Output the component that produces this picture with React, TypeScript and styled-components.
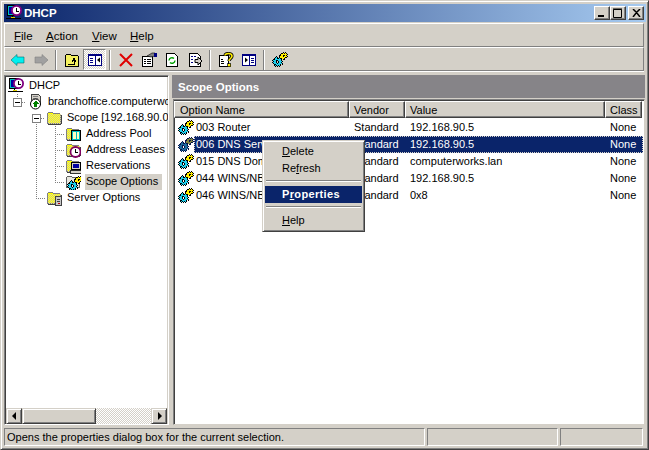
import React from "react";
import styled, { createGlobalStyle } from "styled-components";

const Global = createGlobalStyle`
  html, body { margin: 0; padding: 0; background: #d4d0c8; }
  * { box-sizing: border-box; }
`;
const checker = "repeating-conic-gradient(#d4d0c8 0 25%, #fff 0 50%) 0 0 / 2px 2px";

const Win = styled.div`
  width: 649px; height: 450px; overflow: hidden; display: flex; flex-direction: column;
  padding: 3px 2px 3px 3px; background: #d4d0c8; position: relative;
  font: 11px/13px "Liberation Sans", Arial, sans-serif; color: #000;
  border: 1px solid; border-color: #d4d0c8 #404040 #404040 #d4d0c8;
  box-shadow: inset 1px 1px 0 #fff, inset -1px -1px 0 #808080;
`;
const TitleBar = styled.div`
  height: 18px; margin-bottom: 1px; display: flex; align-items: center; padding: 0 2px 0 2px; flex: none;
  background: linear-gradient(90deg, #0a246a, #a6caf0); color: #fff; font-weight: 700; font-size: 11.5px;
`;
const TitleText = styled.span`margin-left: 2px; padding-top: 1px; flex: 1;`;
const CapBtn = styled.button<{ $gap?: number }>`
  width: 16px; height: 14px; padding: 0; margin-left: ${p => p.$gap ?? 0}px; background: #d4d0c8; border: 1px solid;
  border-color: #fff #404040 #404040 #fff; box-shadow: inset -1px -1px 0 #808080;
  display: flex; align-items: center; justify-content: center;
`;
const Bar = styled.div`
  height: 24px; flex: none; display: flex; align-items: center; width: 640px;
  border: 1px solid; border-color: #fff #808080 #808080 #fff;
`;
const MenuItem = styled.span<{ $w: number }>`
  width: ${p => p.$w}px; flex: none; font-size: 11.5px; padding-top: 2px;
`;
const MenuBar = styled(Bar)`padding-left: 9px;`;
const ToolBar = styled(Bar)`padding: 1px 0 0 1px; box-shadow: 0 1px 0 #fff;`;
const Tool = styled.div<{ $pressed?: boolean }>`
  width: 23px; height: 21px; flex: none; display: flex; align-items: center; justify-content: center;
  ${p => p.$pressed ? `background: ${checker}; border: 1px solid; border-color: #808080 #fff #fff #808080;` : ""}
`;
const Sep = styled.div`
  width: 8px; height: 20px; flex: none;
  &::after { content: ""; display: block; width: 2px; height: 20px; margin-left: 3px; background: linear-gradient(90deg, #808080 50%, #fff 50%); }
`;
const Main = styled.div`flex: none; height: 350px; display: flex; margin-top: 4px; width: 641px;`;
const LeftPane = styled.div`
  width: 165px; margin-right: 3px; height: 350px; background: #fff; display: flex; flex-direction: column;
  border: 1px solid; border-color: #808080 #fff #fff #808080;
  box-shadow: inset 1px 1px 0 #404040, inset -1px -1px 0 #d4d0c8;
`;
const Tree = styled.div`flex: 1; overflow: hidden; padding: 2px 0 0 2px; min-height: 0;`;
const TreeRow = styled.div`height: 16px; display: flex; align-items: center; white-space: nowrap;`;
const IconCell = styled.div`width: 22px; height: 16px; flex: none; padding-left: 1px; display: flex; align-items: center;`;
const TreeLabel = styled.span<{ $sel?: boolean }>`
  padding: 1px 4px 2px 1px; margin-left: -1px; background: ${p => p.$sel ? "#d4d0c8" : "transparent"};
`;
const HScroll = styled.div`height: 16px; display: flex; flex: none; margin: 0 1px 0 1px; background: ${checker};`;
const ScrollBtn = styled.div<{ $w?: number }>`
  width: ${p => p.$w ?? 16}px; height: 16px; background: #d4d0c8; border: 1px solid; flex: none;
  border-color: #d4d0c8 #404040 #404040 #d4d0c8; box-shadow: inset 1px 1px 0 #fff, inset -1px -1px 0 #808080;
  display: flex; align-items: center; justify-content: center;
`;
const ScrollGap = styled.div`flex: 1;`;
const RightPane = styled.div`flex: 1; display: flex; flex-direction: column; height: 350px; min-width: 0;`;
const Band = styled.div`
  height: 23px; flex: none; background: #868488; color: #fff; font-weight: 700; padding: 2px 0 0 6px;
  display: flex; align-items: center; font-size: 11.5px; margin-bottom: 1px;
`;
const List = styled.div`
  flex: 1; margin-left: 1px; background: #fff; min-height: 0; overflow: hidden; padding: 1px 1px 0 1px;
  border: 1px solid; border-color: #808080 #d4d0c8 #d4d0c8 #808080;
  box-shadow: inset 1px 1px 0 #404040;
`;
const Head = styled.div`display: flex; height: 17px; margin: 0 0 1px -1px;`;
const HeadCell = styled.div<{ $w: number }>`
  width: ${p => p.$w}px; flex: none; height: 17px; padding: 2px 0 0 4px; background: #d4d0c8; white-space: nowrap; overflow: hidden;
  display: flex; align-items: center; border: 1px solid; border-color: #fff #404040 #404040 #fff;
  box-shadow: inset -1px -1px 0 #808080;
  &:first-child { padding-left: 5px; }
`;
const Row = styled.div`display: flex; height: 17px; align-items: center; white-space: nowrap;`;
const IconSlot = styled.div`width: 19px; flex: none; padding-left: 3px; display: flex; align-items: center; height: 17px;`;
const RowBody = styled.div<{ $sel?: boolean }>`
  display: flex; flex: 1; height: 17px; align-items: center;
  ${p => p.$sel ? `background: #0a246a; color: #fff; outline: 1px dotted #d4d0c8; outline-offset: -1px;` : ""}
`;
const Col = styled.div<{ $w: number }>`width: ${p => p.$w}px; flex: none; overflow: hidden; padding-left: 5px;`;
const NameText = styled.div`width: 155px; flex: none; overflow: hidden; padding-left: 2px;`;
const Status = styled.div`height: 18px; margin-top: 3px; display: flex; gap: 2px; flex: none;`;
const Panel = styled.div<{ $w: number }>`
  width: ${p => p.$w}px; height: 18px; padding: 0 0 0 2px; white-space: nowrap; border: 1px solid; border-color: #808080 #fff #fff #808080;
  display: flex; align-items: center;
`;
const Menu = styled.div`
  position: absolute; left: 261px; top: 139px; width: 103px; height: 92px; background: #d4d0c8; padding: 2px;
  border: 1px solid; border-color: #d4d0c8 #404040 #404040 #d4d0c8;
  box-shadow: inset 1px 1px 0 #fff, inset -1px -1px 0 #808080;
`;
const MItem = styled.div<{ $on?: boolean }>`
  height: 17px; padding-left: 17px; display: flex; align-items: center;
  ${p => p.$on ? "background: #0a246a; color: #fff; font-weight: 700; letter-spacing: .35px;" : ""}
`;
const MSep = styled.div<{ $b: number }>`height: 2px; margin: 3px 1px ${p => p.$b}px 1px; background: linear-gradient(#808080 50%, #fff 50%);`;

const Ico = ({ s = 16, children, w }: { s?: number; w?: number; children: React.ReactNode }) => (
  <svg width={w ?? s} height={s} viewBox={`0 0 ${w ?? s} ${s}`} style={{ display: "block", flex: "none" }} shapeRendering="crispEdges">{children}</svg>
);

const gearMap = [
  "...........K.K..",
  ".........KKYKYK.",
  "........KYYYYYYK",
  ".......KKYYKKYK.",
  "....K..KYYYKYYYK",
  "...KCK.KYYYYYKK.",
  "..KCCKKCKKYYK...",
  ".KKCCCCCCK.KK...",
  "KCCCKKCCCK......",
  ".KCCK.KCCCK.....",
  "KCCCK.KCCK......",
  ".KCCCKCCCCK.....",
  "..KKCCCCK.K.....",
  "..KCKCKCK.......",
  "...K.K.K........",
  "................",
];
const Pixels = ({ map, pal, x = 0, y = 0 }: { map: string[]; pal: Record<string, string>; x?: number; y?: number }) => (
  <g transform={`translate(${x} ${y})`}>
    {map.flatMap((row, j) => row.split("").map((ch, i) => pal[ch]
      ? <rect key={`${i}-${j}`} x={i} y={j} width={1} height={1} fill={pal[ch]} /> : null))}
  </g>
);
const bright = { K: "#000", Y: "#ffee00", C: "#1fd0ee" };
const dim = { K: "#06124a", Y: "#7d8440", C: "#1c6c9c" };
const Gears = ({ d }: { d?: boolean }) => <Ico><Pixels map={gearMap} pal={d ? dim : bright} /></Ico>;

const ditherCells: [number, number][] = [];
for (let j = 4; j < 14; j++) for (let i = 2; i < 15; i++) if ((i + j) % 2 === 0) ditherCells.push([i, j]);

const FolderShape = () => (
  <g>
    <path d="M1.5 13.5V3.5l1-1h4l1 1h6l1 1v9z" fill="#ffff00" stroke="#808080" />
    {ditherCells.map(([i, j]) => <rect key={`${i}-${j}`} x={i} y={j} width={1} height={1} fill="#d8d49c" />)}
    <path d="M2 14.5h13M15.5 5v9" stroke="#404040" />
  </g>
);
const Dhcp = () => (
  <Ico>
    <rect x="1.5" y=".5" width="9" height="10" fill="#00c0c0" stroke="#000" />
    <rect x="3" y="2" width="5" height="7" fill="#0000a0" />
    <circle cx="10.5" cy="5.5" r="4.6" fill="#fff" stroke="#800080" strokeWidth="1.8" shapeRendering="auto" />
    <path d="M10.5 3v3h2" fill="none" stroke="#000" />
    <path d="M0 13.5h15M6.5 11v2" stroke="#000" fill="none" />
    <path d="M5 12.5h4" stroke="#e0d000" />
  </Ico>
);
const Server = () => (
  <Ico>
    <path d="M4.5 .5h7l2 2v8h-9z" fill="#d4d0c8" stroke="#404040" />
    <path d="M6 2.5h5M6 4.5h5" stroke="#808080" />
    <circle cx="8.5" cy="10" r="5" fill="#fff" stroke="#000" shapeRendering="auto" />
    <path d="M8.5 6.5l3.5 3.5h-2v3h-3v-3h-2z" fill="#008000" />
  </Ico>
);
const Folder = () => <Ico><FolderShape /></Ico>;
const FolderServer = () => (
  <Ico>
    <FolderShape />
    <rect x="9.5" y="6.5" width="6" height="9" fill="#c8c8c8" stroke="#404040" />
    <path d="M11 9h3M11 11h3" stroke="#404040" />
    <rect x="12" y="13" width="2" height="1" fill="#c00000" />
  </Ico>
);
const FolderPool = () => (
  <Ico>
    <FolderShape />
    <rect x="6.5" y="4.5" width="9" height="10" fill="#00c0c0" stroke="#000" />
    <rect x="8" y="6" width="3" height="7" fill="#ffffc0" /><rect x="12" y="6" width="2" height="7" fill="#ffffc0" />
  </Ico>
);
const FolderClock = () => (
  <Ico>
    <FolderShape />
    <circle cx="10.5" cy="10" r="5" fill="#fff" stroke="#800060" strokeWidth="1.8" shapeRendering="auto" />
    <path d="M10.5 7v3h2" fill="none" stroke="#000" />
  </Ico>
);
const FolderPc = () => (
  <Ico>
    <FolderShape />
    <rect x="6.5" y="4.5" width="9" height="7" fill="#d4d0c8" stroke="#000" />
    <rect x="8" y="6" width="6" height="4" fill="#0000a0" />
    <rect x="5" y="12" width="11" height="3" fill="#d4d0c8" stroke="#000" strokeWidth=".8" />
  </Ico>
);
const FolderOpts = () => (
  <Ico>
    <path d="M1.5 13.5V3.5l1-1h4l1 1h6l1 1v9z" fill="#e8e8e0" stroke="#606060" />
    <Pixels map={gearMap} pal={bright} x={2} y={2} />
  </Ico>
);

const Guide = ({ k }: { k: "blank" | "v" | "t" | "l" | "mu" | "md" }) => (
  <Ico w={19}>
    {(k === "v" || k === "t") && <path d="M10.5 0V16" stroke="#808080" strokeDasharray="1 1" />}
    {k === "l" && <path d="M10.5 0V8" stroke="#808080" strokeDasharray="1 1" />}
    {(k === "t" || k === "l") && <path d="M10 8.5H19" stroke="#808080" strokeDasharray="1 1" />}
    {k === "mu" && <path d="M10.5 0V4" stroke="#808080" strokeDasharray="1 1" />}
    {k === "md" && <path d="M10.5 12V16" stroke="#808080" strokeDasharray="1 1" />}
    {(k === "mu" || k === "md") && (
      <g>
        <path d="M15 8.5H19" stroke="#808080" strokeDasharray="1 1" />
        <rect x="6.5" y="4.5" width="8" height="8" fill="#fff" stroke="#808080" />
        <path d="M8 8.5h5" stroke="#000" />
      </g>
    )}
  </Ico>
);

const U = styled.span`text-decoration: underline;`;
const Arrow = ({ c, flip }: { c: string; flip?: boolean }) => (
  <Ico>
    <path d={flip ? "M15 8L9 2.5V5H2v6h7v2.5z" : "M1 8l6-5.5V5h7v6H7v2.5z"} fill={c} stroke={flip ? "#808080" : "#007070"} strokeWidth=".6" shapeRendering="auto" />
  </Ico>
);
const Page = ({ children }: { children?: React.ReactNode }) => (
  <g>
    <path d="M2.5 1.5h8l3 3v10h-11z" fill="#fff" stroke="#000" />
    {children}
  </g>
);

const tools: React.ReactNode[] = [
  <Tool key="b"><Arrow c="#00f0f0" /></Tool>,
  <Tool key="f"><Arrow c="#a0a0a0" flip /></Tool>,
  <Sep key="s1" />,
  <Tool key="u"><Ico>
    <path d="M1.5 14.5V3.5l1-1h4l1 1h6l1 1v10z" fill="#f4f060" stroke="#000" />
    <path d="M4 12h6V8M8 8h4M8 9.5l2-3 2 3" fill="none" stroke="#000" />
  </Ico></Tool>,
  <Tool key="p" $pressed><Ico>
    <rect x="1.5" y="2.5" width="13" height="11" fill="#fff" stroke="#000080" />
    <rect x="1" y="2" width="14" height="2" fill="#000080" />
    <path d="M8.5 3v10" stroke="#000080" /><path d="M3 6h3M3 8h3M3 10h3" stroke="#000080" />
    <path d="M13 5.5L10 8l3 2.5z" fill="#000" shapeRendering="auto" />
  </Ico></Tool>,
  <Sep key="s2" />,
  <Tool key="x"><Ico><path d="M2 2l12 12M14 2L2 14" stroke="#e00000" strokeWidth="2" shapeRendering="auto" /></Ico></Tool>,
  <Tool key="pr"><Ico>
    <path d="M1.5 4.5h10v10h-10z" fill="#fff" stroke="#000" />
    <path d="M3 7h2M6 7h4M3 9h2M6 9h4M3 11h2M6 11h4" stroke="#000" />
    <path d="M6 4l5-3h3v3l-4 1z" fill="#808080" stroke="#000" strokeWidth=".6" shapeRendering="auto" /><rect x="13" y="1" width="3" height="4" fill="#000080" />
  </Ico></Tool>,
  <Tool key="r"><Ico>
    <Page />
    <path d="M5 8.5a3 3 0 0 1 5-2M11 8.5a3 3 0 0 1-5 2" fill="none" stroke="#00a000" strokeWidth="1.4" shapeRendering="auto" />
  </Ico></Tool>,
  <Tool key="e"><Ico>
    <Page>
      <path d="M4 4h2M7 4h2M4 7h2M4 10h2" stroke="#000080" />
    </Page>
    <path d="M8 7.5h3V5l4 4-4 4v-2.5H8z" fill="#d4d0c8" stroke="#000" shapeRendering="auto" />
  </Ico></Tool>,
  <Sep key="s3" />,
  <Tool key="h"><Ico>
    <path d="M1.5 3.5h9v11h-9z" fill="#fff" stroke="#000" />
    <path d="M3 7h2M3 9h3M3 11h3" stroke="#000" />
    <path d="M7 3.5C7 .8 14 .8 14 4c0 2.5-3 2.5-3 5" fill="none" stroke="#000" strokeWidth="3.2" shapeRendering="auto" />
    <path d="M7 3.5C7 .8 14 .8 14 4c0 2.5-3 2.5-3 5" fill="none" stroke="#ffee00" strokeWidth="1.6" shapeRendering="auto" />
    <rect x="9.5" y="11.5" width="3" height="3" fill="#ffee00" stroke="#000" strokeWidth=".7" />
  </Ico></Tool>,
  <Tool key="a"><Ico>
    <rect x="1.5" y="2.5" width="13" height="11" fill="#fff" stroke="#000080" />
    <rect x="1" y="2" width="14" height="2" fill="#000080" />
    <path d="M8.5 3v10" stroke="#000080" /><path d="M10 6h3M10 8h3M10 10h3" stroke="#000080" />
    <path d="M4 5.5L7 8l-3 2.5z" fill="#000" shapeRendering="auto" />
  </Ico></Tool>,
  <Sep key="s4" />,
  <Tool key="g"><Gears /></Tool>,
];

const rows = [
  { n: "003 Router", v: "192.168.90.5" },
  { n: "006 DNS Servers", v: "192.168.90.5", sel: true },
  { n: "015 DNS Domain Name", v: "computerworks.lan" },
  { n: "044 WINS/NBNS Servers", v: "192.168.90.5" },
  { n: "046 WINS/NBT Node Type", v: "0x8" },
];

export default function App() {
  return (
    <Win>
      <Global />
      <TitleBar>
        <Dhcp />
        <TitleText>DHCP</TitleText>
        <CapBtn aria-label="min"><svg width="8" height="8"><rect x="0" y="6" width="6" height="2" fill="#000" /></svg></CapBtn>
        <CapBtn aria-label="max" $gap={0}><svg width="10" height="10"><path d="M.5 1.5h8v8h-8z M0 1h9" fill="none" stroke="#000" /></svg></CapBtn>
        <CapBtn aria-label="close" $gap={2}><svg width="9" height="8"><path d="M1 0l3.5 3.5L8 0M1 8l3.5-4.5L8 8" fill="none" stroke="#000" strokeWidth="1.5" /></svg></CapBtn>
      </TitleBar>
      <MenuBar>
        <MenuItem $w={32}><U>F</U>ile</MenuItem>
        <MenuItem $w={46}><U>A</U>ction</MenuItem>
        <MenuItem $w={38}><U>V</U>iew</MenuItem>
        <MenuItem $w={30}><U>H</U>elp</MenuItem>
      </MenuBar>
      <ToolBar>{tools}</ToolBar>
      <Main>
        <LeftPane>
          <Tree>
            <TreeRow><IconCell><Dhcp /></IconCell><TreeLabel>DHCP</TreeLabel></TreeRow>
            <TreeRow><Guide k="mu" /><IconCell><Server /></IconCell><TreeLabel>branchoffice.computerworks.lan</TreeLabel></TreeRow>
            <TreeRow><Guide k="blank" /><Guide k="md" /><IconCell><Folder /></IconCell><TreeLabel>Scope [192.168.90.0] Branch</TreeLabel></TreeRow>
            <TreeRow><Guide k="blank" /><Guide k="v" /><Guide k="t" /><IconCell><FolderPool /></IconCell><TreeLabel>Address Pool</TreeLabel></TreeRow>
            <TreeRow><Guide k="blank" /><Guide k="v" /><Guide k="t" /><IconCell><FolderClock /></IconCell><TreeLabel>Address Leases</TreeLabel></TreeRow>
            <TreeRow><Guide k="blank" /><Guide k="v" /><Guide k="t" /><IconCell><FolderPc /></IconCell><TreeLabel>Reservations</TreeLabel></TreeRow>
            <TreeRow><Guide k="blank" /><Guide k="v" /><Guide k="l" /><IconCell><FolderOpts /></IconCell><TreeLabel $sel>Scope Options</TreeLabel></TreeRow>
            <TreeRow><Guide k="blank" /><Guide k="l" /><IconCell><FolderServer /></IconCell><TreeLabel>Server Options</TreeLabel></TreeRow>
          </Tree>
          <HScroll>
            <ScrollBtn><svg width="5" height="8"><path d="M4 0v8L0 4z" fill="#000" /></svg></ScrollBtn>
            <ScrollBtn $w={74} />
            <ScrollGap />
            <ScrollBtn><svg width="5" height="8"><path d="M1 0v8l4-4z" fill="#000" /></svg></ScrollBtn>
          </HScroll>
        </LeftPane>
        <RightPane>
          <Band>Scope Options</Band>
          <List>
            <Head>
              <HeadCell $w={175}>Option Name</HeadCell>
              <HeadCell $w={56}>Vendor</HeadCell>
              <HeadCell $w={200}>Value</HeadCell>
              <HeadCell $w={37}>Class</HeadCell>
            </Head>
            {rows.map(r => (
              <Row key={r.n}>
                <IconSlot><Gears d={r.sel} /></IconSlot>
                <RowBody $sel={r.sel}>
                  <NameText>{r.n}</NameText>
                  <Col $w={56}>Standard</Col>
                  <Col $w={200}>{r.v}</Col>
                  <Col $w={37}>None</Col>
                </RowBody>
              </Row>
            ))}
          </List>
        </RightPane>
      </Main>
      <Status>
        <Panel $w={421}>Opens the properties dialog box for the current selection.</Panel>
        <Panel $w={131} />
        <Panel $w={83} />
      </Status>
      <Menu>
        <MItem><U>D</U>elete</MItem>
        <MItem>Re<U>f</U>resh</MItem>
        <MSep $b={4} />
        <MItem $on>P<U>r</U>operties</MItem>
        <MSep $b={4} />
        <MItem><U>H</U>elp</MItem>
      </Menu>
    </Win>
  );
}
